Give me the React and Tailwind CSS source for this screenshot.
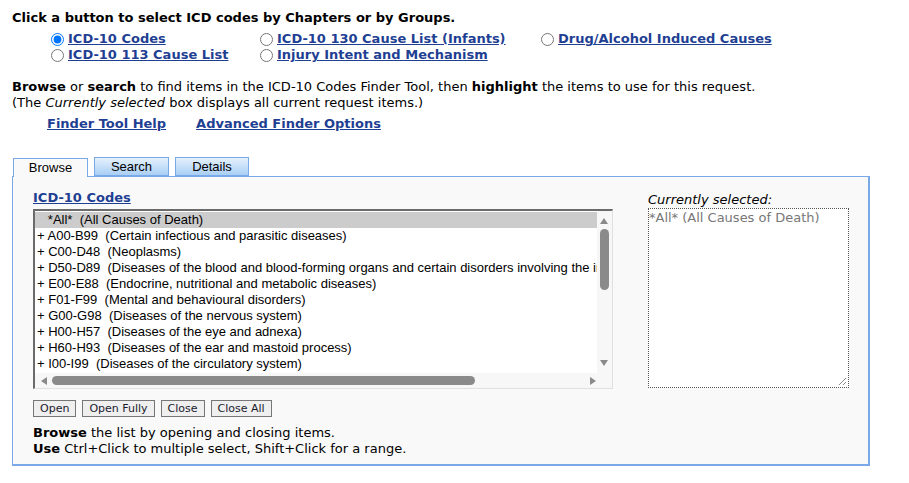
import React from "react";

const verdana = { fontFamily: '"DejaVu Sans", Verdana, sans-serif' };

function Radio({ checked, label }) {
  return (
    <label className="flex items-center gap-[4px] h-[16px]">
      <input type="radio" readOnly checked={checked} className="m-0 w-[13px] h-[13px]" />
      <a className="font-bold text-[#1f3f93] underline text-[13px] leading-[16px]">{label}</a>
    </label>
  );
}

const rows = [
  ["   *All*", "(All Causes of Death)", true],
  ["+ A00-B99", "(Certain infectious and parasitic diseases)"],
  ["+ C00-D48", "(Neoplasms)"],
  ["+ D50-D89", "(Diseases of the blood and blood-forming organs and certain disorders involving the immune mechanism)"],
  ["+ E00-E88", "(Endocrine, nutritional and metabolic diseases)"],
  ["+ F01-F99", "(Mental and behavioural disorders)"],
  ["+ G00-G98", "(Diseases of the nervous system)"],
  ["+ H00-H57", "(Diseases of the eye and adnexa)"],
  ["+ H60-H93", "(Diseases of the ear and mastoid process)"],
  ["+ I00-I99", "(Diseases of the circulatory system)"],
];

function Btn({ children }) {
  return (
    <button className="h-[17px] px-[6px] border border-[#767676] bg-[#efefef] text-[11px] leading-[15px] text-[#1a1a2e]">
      {children}
    </button>
  );
}

export default function App() {
  return (
    <div className="w-[909px] h-[483px] bg-white text-[13px] text-black pl-[12px] pt-[10px]" style={verdana}>
      <div className="font-bold leading-[16px]">Click a button to select ICD codes by Chapters or by Groups.</div>
      <div className="grid grid-cols-[209px_281px_auto] ml-[39px] mt-[5px]">
        <Radio checked label="ICD-10 Codes" />
        <Radio label="ICD-10 130 Cause List (Infants)" />
        <Radio label="Drug/Alcohol Induced Causes" />
        <Radio label="ICD-10 113 Cause List" />
        <Radio label="Injury Intent and Mechanism" />
      </div>
      <div className="mt-[16px] leading-[16px]">
        <b>Browse</b> or <b>search</b> to find items in the ICD-10 Codes Finder Tool, then <b>highlight</b> the items to use for this request.
        <br />
        (The <i>Currently selected</i> box displays all current request items.)
      </div>
      <div className="flex gap-[30px] ml-[35px] mt-[5px] leading-[16px]">
        <a className="font-bold text-[#1f3f93] underline">Finder Tool Help</a>
        <a className="font-bold text-[#1f3f93] underline">Advanced Finder Options</a>
      </div>

      <div className="mt-[25px] w-[858px]">
        <div className="flex items-end gap-[6px] pl-[1px] h-[19px]" style={{ fontFamily: '"Liberation Sans", Arial, sans-serif' }}>
          <div className="w-[75px] h-[19px] border border-b-0 border-[#7aa9e8] bg-[#f9f9f9] text-center text-[13px] leading-[18px] relative top-[1px] z-10">Browse</div>
          <div className="w-[75px] h-[19px] border border-[#7aa9e8] bg-gradient-to-b from-[#e6f1fc] to-[#a9cef5] text-center text-[13px] leading-[17px]">Search</div>
          <div className="w-[74px] h-[19px] border border-[#7aa9e8] bg-gradient-to-b from-[#e6f1fc] to-[#a9cef5] text-center text-[13px] leading-[17px]">Details</div>
        </div>
        <div className="h-[290px] border border-r-2 border-b-2 border-[#7aa9e8] bg-[#f9f9f9] flex pl-[20px] pt-[13px]">
          <div className="w-[580px]">
            <a className="font-bold text-[#1f3f93] underline leading-[16px] block">ICD-10 Codes</a>
            <div className="mt-[3px] h-[180px] border-t-2 border-l-2 border-t-[#6b6b6b] border-l-[#6b6b6b] border-r border-b border-r-[#e0e0e0] border-b-[#e0e0e0] bg-white flex flex-col overflow-hidden" style={{ fontFamily: '"Liberation Sans", Arial, sans-serif' }}>
              <div className="flex flex-1 min-h-0">
                <div className="flex-1 min-w-0 overflow-hidden pt-[1px]">
                  {rows.map(([code, desc, sel], i) => (
                    <div key={i} className={`h-[16px] leading-[16px] text-[13px] whitespace-pre pl-[2px] ${sel ? "bg-[#cccccc]" : ""}`}>
                      {code}  {desc}
                    </div>
                  ))}
                </div>
                <div className="w-[15px] bg-[#f7f7f7] relative">
                  <div className="absolute left-[3px] top-[7px] w-0 h-0 border-l-[4px] border-r-[4px] border-b-[6px] border-l-transparent border-r-transparent border-b-[#8a8a8a]" />
                  <div className="absolute left-[3px] top-[18px] w-[9px] h-[61px] rounded-full bg-[#8a8a8a]" />
                  <div className="absolute left-[3px] bottom-[7px] w-0 h-0 border-l-[4px] border-r-[4px] border-t-[6px] border-l-transparent border-r-transparent border-t-[#8a8a8a]" />
                </div>
              </div>
              <div className="h-[15px] bg-[#f7f7f7] relative">
                <div className="absolute left-[6px] top-[4px] w-0 h-0 border-t-[4px] border-b-[4px] border-r-[6px] border-t-transparent border-b-transparent border-r-[#8a8a8a]" />
                <div className="absolute left-[17px] top-[3px] w-[423px] h-[9px] rounded-full bg-[#8a8a8a]" />
                <div className="absolute left-[555px] top-[4px] w-0 h-0 border-t-[4px] border-b-[4px] border-l-[6px] border-t-transparent border-b-transparent border-l-[#8a8a8a]" />
              </div>
            </div>
            <div className="flex gap-[6px] mt-[11px]">
              <Btn>Open</Btn>
              <Btn>Open Fully</Btn>
              <Btn>Close</Btn>
              <Btn>Close All</Btn>
            </div>
            <div className="mt-[8px] leading-[16px]">
              <b>Browse</b> the list by opening and closing items.
              <br />
              <b>Use</b> Ctrl+Click to multiple select, Shift+Click for a range.
            </div>
          </div>
          <div className="ml-[35px] pt-[2px]">
            <div className="italic leading-[16px]">Currently selected:</div>
            <div className="relative w-[201px] h-[180px] border border-dotted border-[#555] bg-white text-[#777] leading-[16px] pt-[1px]">
              *All* (All Causes of Death)
              <svg className="absolute right-[1px] bottom-[1px]" width="9" height="9" viewBox="0 0 9 9">
                <path d="M8 1L1 8M8 5L5 8" stroke="#888" strokeWidth="1" />
              </svg>
            </div>
          </div>
        </div>
      </div>
    </div>
  );
}
